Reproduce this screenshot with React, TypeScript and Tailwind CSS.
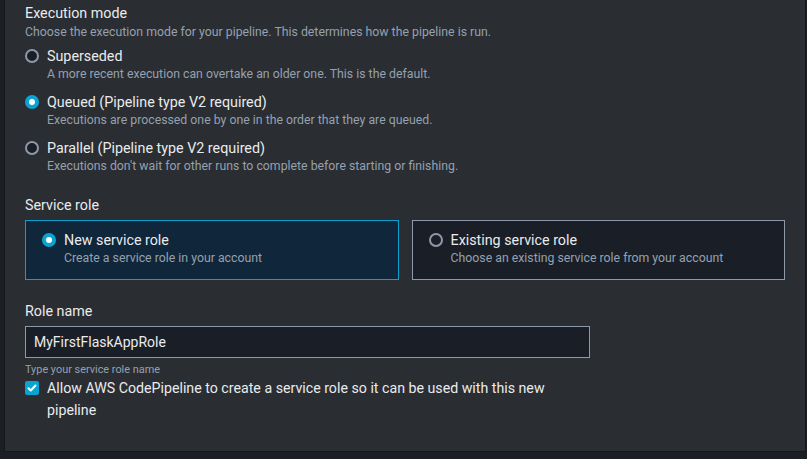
const MODES = [
  {
    label: 'Superseded',
    desc: 'A more recent execution can overtake an older one. This is the default.',
    checked: false,
  },
  {
    label: 'Queued (Pipeline type V2 required)',
    desc: 'Executions are processed one by one in the order that they are queued.',
    checked: true,
  },
  {
    label: 'Parallel (Pipeline type V2 required)',
    desc: "Executions don't wait for other runs to complete before starting or finishing.",
    checked: false,
  },
];

const ROLES = [
  { label: 'New service role', desc: 'Create a service role in your account', checked: true },
  { label: 'Existing service role', desc: 'Choose an existing service role from your account', checked: false },
];

function Radio({ checked }: { checked: boolean }) {
  return checked ? (
    <span className="flex h-[14px] w-[14px] shrink-0 items-center justify-center rounded-full bg-[#0aa4d2]">
      <span className="h-[6px] w-[6px] rounded-full bg-white" />
    </span>
  ) : (
    <span className="h-[14px] w-[14px] shrink-0 rounded-full border-2 border-[#8d99a8] bg-[#1a1f27]" />
  );
}

export default function App() {
  return (
    <div className="h-[459px] w-[807px] overflow-hidden bg-[#1b1e23] font-['Roboto',sans-serif] text-[#e9ebed]">
      <div className="ml-[4px] h-[452px] w-[802px] border-x border-b border-[#15181d] bg-[#2a2d32] px-5 pt-[3px]">
        {/* Execution mode */}
        <div className="text-[14.3px] leading-[20px] text-[#e9ebed]">Execution mode</div>
        <div className="text-[12.3px] leading-[18px] text-[#95a1b0]">
          Choose the execution mode for your pipeline. This determines how the pipeline is run.
        </div>
        <div className="mt-[5px] flex flex-col gap-[10px]">
          {MODES.map((m) => (
            <div key={m.label} className="flex gap-2">
              <div className="flex h-[20px] items-center">
                <Radio checked={m.checked} />
              </div>
              <div>
                <div className="text-[14.3px] leading-[20px]">{m.label}</div>
                <div className="text-[12.3px] leading-[16px] text-[#95a1b0]">{m.desc}</div>
              </div>
            </div>
          ))}
        </div>

        {/* Service role */}
        <div className="mt-[21px] text-[14.3px] leading-[20px]">Service role</div>
        <div className="mt-[5px] grid grid-cols-2 gap-[13px]">
          {ROLES.map((r) => (
            <div
              key={r.label}
              className={`flex h-[60px] gap-2 border px-4 pt-[9px] ${
                r.checked ? 'border-[#0a9fcc] bg-[#10263a]' : 'border-[#8d99a8] bg-[#1a1f27]'
              }`}
            >
              <div className="flex h-[20px] items-center">
                <Radio checked={r.checked} />
              </div>
              <div>
                <div className="text-[14.3px] leading-[20px]">{r.label}</div>
                <div className="text-[12.3px] leading-[16px] text-[#95a1b0]">{r.desc}</div>
              </div>
            </div>
          ))}
        </div>

        {/* Role name */}
        <div className="mt-[21px] text-[14.3px] leading-[20px]">Role name</div>
        <div className="mt-[5px] flex h-[32px] w-[565px] items-center border border-[#8d99a8] bg-[#1a1f27] px-2 text-[14px]">
          MyFirstFlaskAppRole
        </div>
        <div className="mt-[4px] text-[10.9px] leading-[16px] text-[#95a1b0]">Type your service role name</div>
        <div className="-mt-px flex gap-2">
          <div className="flex h-[22px] items-center">
            <span className="flex h-[14px] w-[14px] items-center justify-center rounded-[2px] bg-[#0aa4d2]">
              <svg width="10" height="10" viewBox="0 0 10 10" fill="none" stroke="white" strokeWidth="2">
                <path d="M1.5 5.2l2.3 2.3L8.5 2.5" strokeLinecap="round" strokeLinejoin="round" />
              </svg>
            </span>
          </div>
          <div className="w-[520px] text-[14.2px] leading-[22px]">
            Allow AWS CodePipeline to create a service role so it can be used with this new pipeline
          </div>
        </div>
      </div>
    </div>
  );
}
